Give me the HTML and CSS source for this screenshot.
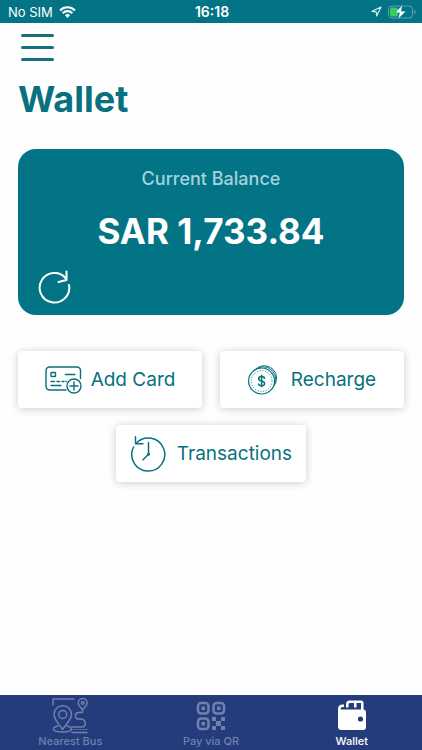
FILE: index.html
```html
<!DOCTYPE html>
<html lang="en">
<head>
    <meta charset="UTF-8">
    <meta name="viewport" content="width=device-width, initial-scale=1.0">
    <title>Wallet</title>
    <link rel="stylesheet" href="styles.css">
</head>
<body>

    <!-- Status bar -->
    <div class="status-bar">
        <div class="status-left">
            <span>No SIM</span>
            <svg width="17" height="12" viewBox="0 0 17 12" fill="none" stroke="#fff" stroke-width="2.1">
                <path d="M1 4.4a10.6 10.6 0 0 1 15 0"/>
                <path d="M3.6 7.2a6.9 6.9 0 0 1 9.8 0"/>
                <path d="M8.5 12L5.9 9.3a3.7 3.7 0 0 1 5.2 0z" fill="#fff" stroke="none"/>
            </svg>
        </div>
        <span class="status-time">16:18</span>
        <div class="status-right">
            <svg width="11" height="11" viewBox="0 0 11 11" fill="none" stroke="#d3edf1" stroke-width="1.2" stroke-linejoin="round">
                <path d="M10 1L1 5.3l4.2.5L5.7 10z"/>
            </svg>
            <svg width="28" height="14" viewBox="0 0 28 14">
                <rect x="0.5" y="1" width="24" height="12" rx="3.5" fill="none" stroke="#62a5b0"/>
                <path d="M26 5v4.2q1.5-.6 1.5-2.1T26 5z" fill="#62a5b0"/>
                <rect x="2" y="2.5" width="8" height="9" rx="2" fill="#35cf5b"/>
                <path d="M14.5 0L7 7.8h4.5L10 14l8-7.8h-4.8z" fill="#fff" stroke="#037386" stroke-width="0.4"/>
            </svg>
        </div>
    </div>

    <main class="content">
        <button class="menu-button" aria-label="Menu">
            <span></span>
            <span></span>
            <span></span>
        </button>

        <h1>Wallet</h1>

        <!-- Balance -->
        <section class="balance-card">
            <p class="balance-label">Current Balance</p>
            <p class="balance-amount">SAR 1,733.84</p>
            <button class="refresh-button" aria-label="Refresh balance">
                <svg width="34" height="34" viewBox="0 0 34 34" fill="none" stroke="#fff" stroke-width="2" stroke-linecap="round" stroke-linejoin="round">
                    <path d="M31 15A14.8 14.8 0 1 1 28 8.5"/>
                    <path d="M28.5 1.5V10l-8 2"/>
                </svg>
            </button>
        </section>

        <!-- Actions -->
        <div class="actions">
            <button class="action">
                <svg width="37" height="28" viewBox="0 0 37 28" fill="none" stroke="#087180" stroke-width="1.4" stroke-linecap="round">
                    <path d="M21 24H4.5A3.5 3.5 0 0 1 1 20.5v-16A3.5 3.5 0 0 1 4.5 1H32a3.5 3.5 0 0 1 3.5 3.5v8"/>
                    <rect x="6" y="6.5" width="4.5" height="4" rx="0.5"/>
                    <path d="M20.5 8.5H30M6 15.5h3.5M12 15.5h2.5M17 15.5h2M21 15.5h.5M6 19.5h10"/>
                    <circle cx="29" cy="20" r="7"/>
                    <path d="M29 16v8M25 20h8"/>
                </svg>
                <span>Add Card</span>
            </button>
            <button class="action action-recharge">
                <svg width="29" height="30" viewBox="0 0 29 30" fill="#fff" stroke="#087180">
                    <circle cx="16.3" cy="13" r="12.3"/>
                    <circle cx="15" cy="14.5" r="12.8"/>
                    <circle cx="13.6" cy="16" r="13" stroke-width="1.2"/>
                    <circle cx="13.6" cy="16" r="10.4" stroke-dasharray="1 1.75"/>
                    <path d="M16.6 13.7c0-1.5-1.3-2.3-3-2.3s-3 .8-3 2.3c0 3 6 1.6 6 4.7 0 1.5-1.3 2.3-3 2.3s-3-.8-3-2.3M13.6 9.8v12.4" fill="none" stroke-width="1.5"/>
                </svg>
                <span>Recharge</span>
            </button>
            <button class="action action-transactions">
                <svg width="36" height="36" viewBox="0 0 36 36" fill="none" stroke="#087180" stroke-width="1.5" stroke-linecap="round" stroke-linejoin="round">
                    <path d="M3.6 11A16.5 16.5 0 1 0 6.3 7.2"/>
                    <path d="M5.5.8v7H13"/>
                    <path d="M18.5 6.5v11.7L13 23.7"/>
                    <circle cx="18.5" cy="18.2" r="0.8" fill="#087180"/>
                </svg>
                <span>Transactions</span>
            </button>
        </div>
    </main>

    <!-- Bottom tabs -->
    <nav class="tabs">
        <a class="tab" href="#bus">
            <svg width="36" height="36" viewBox="0 0 36 36" fill="none" stroke="currentColor" stroke-width="1.5" stroke-linecap="round" stroke-linejoin="round">
                <path d="M1 7V1h21"/>
                <path d="M10.5 31.5C7 26 2 21.5 2 16.5a8.5 8.5 0 0 1 17.5 0c0 5-5.5 9.5-9 15z"/>
                <circle cx="10.7" cy="16.5" r="4"/>
                <path d="M6 28c-3 .6-4.5 1.7-4.5 2.9 0 1.8 4 3 9 3s9-1.2 9-3c0-1.2-1.8-2.3-4.5-2.9"/>
                <path d="M30.5 12c-1.2-2.2-4.3-4.2-4.3-7a4.5 4.5 0 0 1 9 0c0 2.8-3.5 4.8-4.7 7z"/>
                <circle cx="30.7" cy="5" r="1.3"/>
                <path d="M30.5 12v2.5h-3.7c-4.5 0-4.5 6.5 0 6.5h2c5 0 6.5 8 1.2 8H20"/>
                <path d="M19 31.5h16" stroke-dasharray="1 2" stroke-width="1"/>
                <path d="M20 34.5h15"/>
            </svg>
            <span>Nearest Bus</span>
        </a>
        <a class="tab" href="#qr">
            <svg width="30" height="30" viewBox="0 0 30 30" fill="none" stroke="currentColor" stroke-width="2.5">
                <rect x="2" y="2" width="10.5" height="10.5" rx="3"/>
                <rect x="17.5" y="2" width="10.5" height="10.5" rx="3"/>
                <rect x="2" y="17.5" width="10.5" height="10.5" rx="3"/>
                <path fill="currentColor" stroke="none" d="M5.5 5.5H9V9H5.5zM21 5.5h3.5V9H21zM5.5 21H9v3.5H5.5zM16 16h4v4h-4zM25 16h4v4h-4zM20 20h5v5h-5zM16 25h4v4h-4zM25 25h4v4h-4z"/>
            </svg>
            <span>Pay via QR</span>
        </a>
        <a class="tab tab-active" href="#wallet">
            <svg width="30" height="32" viewBox="0 0 30 32">
                <path fill="currentColor" fill-rule="evenodd" d="M3.5 9.5H26q3 0 3 3V27q0 3-3 3H4.5Q1 30 1 26.5V9Q1 4.500 5.500 4.500H7V7H5.500Q3.500 7 3.500 9.500zM23.500 16.400a2.600 2.600 0 1 0 0 5.200 2.600 2.600 0 0 0 0-5.200z"/>
                <path fill="currentColor" d="M9 7.500V4Q9 .5 12.500.5H24q2.500 0 2.500 2.500v7H24V3h-4.500v4.500H17V3h-4q-1.500 0-1.500 1.500v3z"/>
            </svg>
            <span>Wallet</span>
        </a>
    </nav>

</body>
</html>
```
FILE: styles.css
```css
* {
    box-sizing: border-box;
}
body {
    margin: 0;
    min-height: 100vh;
    display: flex;
    flex-direction: column;
    background: #fefefe;
    color: #087180;
    font-family: Inter, "Liberation Sans", sans-serif;
}
button {
    padding: 0;
    border: none;
    background: none;
    color: inherit;
    font-family: inherit;
    cursor: pointer;
}
svg {
    display: block;
    flex-shrink: 0;
}

/* Status bar */
.status-bar {
    display: grid;
    grid-template-columns: 1fr auto 1fr;
    align-items: center;
    height: 23px;
    padding: 0 6px 0 8px;
    background: #037386;
    color: #fff;
    font-size: 13px;
}
.status-left, .status-right {
    display: flex;
    align-items: center;
    gap: 6px;
}
.status-right {
    justify-content: flex-end;
}
.status-time {
    font-size: 14px;
    font-weight: 600;
}

.content {
    flex: 1;
    padding: 11px 18px 20px;
}
.menu-button {
    display: flex;
    flex-direction: column;
    gap: 9px;
    width: 36px;
    padding: 0 0 0 3px;
}
.menu-button span {
    height: 3px;
    border-radius: 2px;
    background: #167080;
}
h1 {
    margin: 16px 0 28px;
    font-size: 36px;
    line-height: 44px;
    font-weight: 700;
}

/* Balance */
.balance-card {
    padding: 18px 20px 11px;
    border-radius: 18px;
    background: #037386;
    color: #fff;
    text-align: center;
}
.balance-label {
    margin: 0 0 18px;
    color: #a3d3dc;
    font-size: 18px;
    line-height: 24px;
    font-weight: 500;
}
.balance-amount {
    margin: 0 0 17px;
    font-size: 35px;
    line-height: 44px;
    font-weight: 700;
}
.refresh-button {
    display: block;
}

/* Actions */
.actions {
    display: grid;
    grid-template-columns: 1fr 1fr;
    gap: 17px 18px;
    margin-top: 36px;
}
.action {
    display: flex;
    align-items: center;
    justify-content: center;
    gap: 9px;
    height: 57px;
    border-radius: 4px;
    background: #fff;
    box-shadow: 0 1px 8px rgba(0, 0, 0, 0.2);
    font-size: 19px;
}
.action-recharge {
    gap: 14px;
}
.action-transactions {
    grid-column: 1 / 3;
    justify-self: center;
    gap: 11px;
    padding: 0 14px;
}

/* Bottom tabs */
.tabs {
    display: flex;
    height: 55px;
    background: #243c7c;
}
.tab {
    flex: 1;
    display: flex;
    flex-direction: column;
    align-items: center;
    justify-content: space-between;
    padding: 3px 0 2px;
    color: #7081ab;
    font-size: 11px;
    line-height: 14px;
    font-weight: 500;
    text-decoration: none;
}
.tab svg {
    margin: auto 0;
}
.tab-active {
    color: #fff;
}
```
